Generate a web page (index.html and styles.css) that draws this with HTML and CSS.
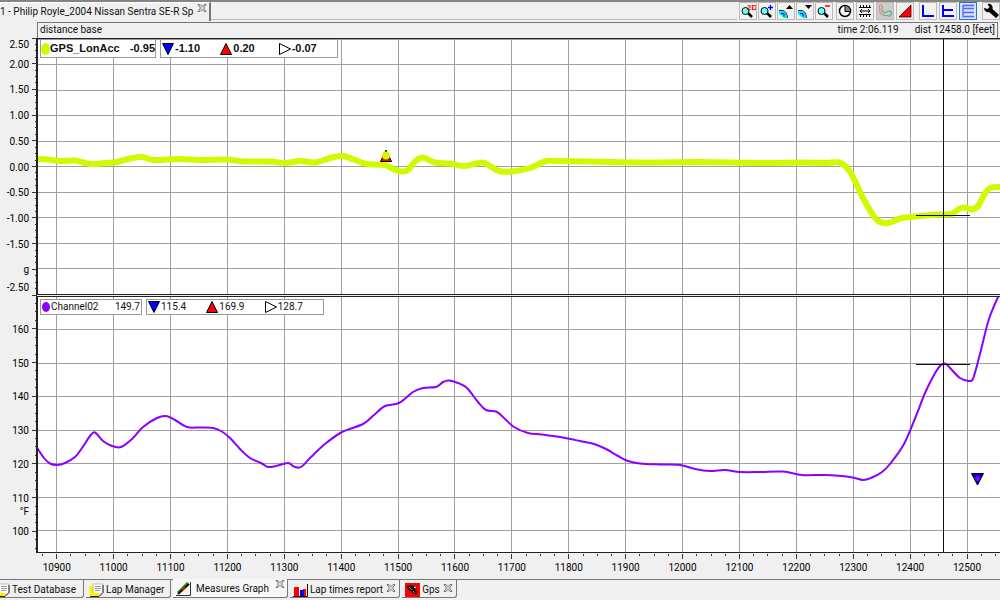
FILE: index.html
```html
<!DOCTYPE html>
<html lang="en">
<head>
<meta charset="utf-8">
<title>Measures Graph</title>
<link rel="stylesheet" href="styles.css">
</head>
<body>
<header class="topbar">
  <div class="doc-tab"><span>1 - Philip Royle_2004 Nissan Sentra SE-R Sp</span><button class="close" aria-label="Close document"><svg viewBox="0 0 10 8"><use href="#x"/></svg></button></div>
  <div class="topbar-line"></div>
  <nav class="toolbar" aria-label="Graph tools">
    <div class="group tight">
      <button aria-label="Zoom 2D"><svg viewBox="0 0 16 16"><use href="#lens"/><text class="tiny" x="7" y="7">2D</text></svg></button>
      <button aria-label="Zoom in"><svg viewBox="0 0 16 16"><use href="#lens"/><path d="M9 4.500h5M11.500 2v5" stroke="#00f" stroke-width="1.300"/></svg></button>
      <button aria-label="Scale up"><svg viewBox="0 0 16 16"><use href="#scope"/><path d="M8 6l3.500-4 3.500 4z"/></svg></button>
      <button aria-label="Scale down"><svg viewBox="0 0 16 16"><use href="#scope"/><path d="M8 2l3.500 4 3.500-4z"/></svg></button>
      <button aria-label="Zoom out"><svg viewBox="0 0 16 16"><use href="#lens"/><path d="M9 3h5" stroke="red" stroke-width="1.500"/></svg></button>
    </div>
    <div class="group">
      <button aria-label="Time base"><svg viewBox="0 0 16 16"><circle cx="8" cy="8" r="5.500" fill="#fff" stroke="#000" stroke-width="1.500"/><path d="M8 8V3a5 5 0 0 1 5 5z" fill="#888"/><path d="M8 3v5.500h5" fill="none" stroke="#000"/></svg></button>
      <button aria-label="Distance base"><svg viewBox="0 0 16 16"><path d="M3.500 2v3M6.500 2v3M9.500 2v3M12.500 2v3M3.500 11v3M6.500 11v3M9.500 11v3M12.500 11v3M2 4.500h12M2 11.500h12M3 8h10M5 6L3 8l2 2M11 6l2 2-2 2" fill="none" stroke="#000"/></svg></button>
      <button class="pressed" aria-label="Track map"><svg viewBox="0 0 16 16"><path d="M6 12Q2 11 3 6Q1 2 4 2Q6 3 5 7" fill="none" stroke="#d88" stroke-width="1.200"/><path d="M5 7Q6 11 9 9L13 8Q16 10 13 13L6 12" fill="none" stroke="#5a8" stroke-width="1.200"/></svg></button>
      <button aria-label="Slope"><svg viewBox="0 0 16 16"><path d="M2 14L14 2v12z" fill="red" stroke="#300" stroke-width=".8"/></svg></button>
    </div>
    <div class="group wide">
      <button aria-label="Single graph"><svg viewBox="0 0 16 16"><path d="M3 2v11h11" fill="none" stroke="#00f" stroke-width="2"/></svg></button>
      <button aria-label="Two graphs"><svg viewBox="0 0 16 16"><path d="M3 2v11h11M3 7h10" fill="none" stroke="#00f" stroke-width="2"/></svg></button>
      <button class="selected" aria-label="Stacked graphs"><svg viewBox="0 0 16 16"><path d="M3 2v11.500h11M3 9.500h11M3 5.500h11M3 2.500h11" fill="none" stroke="#56f" stroke-width="1.300"/></svg></button>
    </div>
    <div class="group wide">
      <button aria-label="Settings"><svg viewBox="0 0 16 16"><path d="M1 5a4 4 0 0 0 5 4l7 6 3-3-6.500-6a4 4 0 0 0-5-5l2 3-2 2z"/></svg></button>
    </div>
  </nav>
</header>

<div class="infobar">
  <span>distance base</span>
  <span class="readout"><span>time 2:06.119</span><span>dist 12458.0 [feet]</span></span>
</div>

<main class="graphs">
  <svg class="axis" id="axis-acc" aria-hidden="true"></svg>
  <section class="plot" aria-label="GPS_LonAcc">
    <svg class="canvas" id="plot-acc"></svg>
    <div class="legend bold">
      <div class="box channel"><i class="dot lime"></i><span>GPS_LonAcc</span><span class="value">-0.95</span></div>
      <div class="box stats"><span><svg viewBox="0 0 12 12"><use href="#min"/></svg>-1.10</span><span><svg viewBox="0 0 12 12"><use href="#max"/></svg>0.20</span><span><svg viewBox="0 0 12 12"><use href="#avg"/></svg>-0.07</span></div>
    </div>
  </section>
  <svg class="axis" id="axis-temp" aria-hidden="true"></svg>
  <section class="plot" aria-label="Channel02">
    <svg class="canvas" id="plot-temp"></svg>
    <div class="legend">
      <div class="box channel"><i class="dot violet"></i><span>Channel02</span><span class="value">149.7</span></div>
      <div class="box stats"><span><svg viewBox="0 0 12 12"><use href="#min"/></svg>115.4</span><span><svg viewBox="0 0 12 12"><use href="#max"/></svg>169.9</span><span><svg viewBox="0 0 12 12"><use href="#avg"/></svg>128.7</span></div>
    </div>
  </section>
  <div class="xaxis"><svg id="xaxis"></svg></div>
</main>

<nav class="tabs" aria-label="Views">
  <button class="tab first"><svg class="ticon" viewBox="0 0 15 14"><use href="#note"/></svg>Test Database</button>
  <button class="tab second"><svg class="ticon" viewBox="0 0 15 14"><use href="#note"/></svg>Lap Manager</button>
  <div class="tab active"><button class="label"><svg class="ticon" viewBox="0 0 15 14"><path d="M14.500 0v13.500H0" fill="none" stroke="#333"/><path d="M2 11L12 1" stroke="#0a0" stroke-width="3"/><path d="M2 12L13 2" stroke="#200" stroke-width="2"/><path d="M6 8l3-3" stroke="red" stroke-width="2"/></svg>Measures Graph</button><button class="close" aria-label="Close Measures Graph"><svg viewBox="0 0 10 8"><use href="#x"/></svg></button></div>
  <div class="tab"><button class="label"><svg class="ticon" viewBox="0 0 15 14"><path d="M1 4h5v9H1zM10 6h3v7h-3z" fill="red"/><path d="M7 7h4v6H7z" fill="#00f"/><path d="M14.500 1v12.500H0" fill="none" stroke="#300"/></svg>Lap times report</button><button class="close" aria-label="Close Lap times report"><svg viewBox="0 0 10 8"><use href="#x"/></svg></button></div>
  <div class="tab"><button class="label"><svg class="ticon" viewBox="0 0 15 14"><path d="M0 0h15v14H0z" fill="red"/><path d="M2 3l5-1 5 3-2 2 3 2-2 3-3-2-2-2-3-1z" fill="#201010"/><path d="M4 4l3 3M8 8l2 2" stroke="#58c"/><path d="M9 4l2 1" stroke="#fff"/></svg>Gps</button><button class="close" aria-label="Close Gps"><svg viewBox="0 0 10 8"><use href="#x"/></svg></button></div>
</nav>

<svg class="defs" aria-hidden="true">
  <symbol id="x" viewBox="0 0 10 8"><path d="M1 .5h2l2 2 2-2h2L6.500 4 9 7.500H7l-2-2-2 2H1L3.500 4z" fill="#ddd" stroke="#777"/></symbol>
  <symbol id="lens" viewBox="0 0 16 16"><path d="M8 10l4 4" stroke="#000" stroke-width="2.500"/><circle cx="5.500" cy="8" r="3.500" fill="#6ff" stroke="#000"/></symbol>
  <symbol id="scope" viewBox="0 0 16 16"><path d="M1 8h4q4 1 4 7H6L1 11z" fill="#0ee"/><path d="M1 7.500h4q4 1 4.500 7.500" fill="none" stroke="#333"/><path d="M3 10.500h3v3" fill="none" stroke="#00f"/></symbol>
  <symbol id="min" viewBox="0 0 12 12"><path d="M.5.5h11L6 11.500z" fill="#00f" stroke="#000"/></symbol>
  <symbol id="max" viewBox="0 0 12 12"><path d="M.5 11.500h11L6 .5z" fill="red" stroke="#000"/></symbol>
  <symbol id="avg" viewBox="0 0 12 12"><path d="M.5.5v11L11.500 6z" fill="#fff" stroke="#000"/></symbol>
  <symbol id="note" viewBox="0 0 15 14"><path d="M0 3h5v10H1z" fill="#fe0"/><path d="M4 1h10v9l-3 2H4z" fill="#fff" stroke="#999" stroke-width=".6"/><path d="M6 3.500h6M6 5.500h6M6 7.500h5" stroke="#999"/><path d="M1 13V7l4 3h6l-1 3z" fill="#fe0"/><path d="M1 13.500h9l4-4V2" fill="none" stroke="#222"/></symbol>
</svg>
<script src="graph.js"></script>
</body>
</html>
```
FILE: styles.css
```css
* { box-sizing: border-box; }

body {
  margin: 0;
  height: 100vh;
  min-height: 400px;
  display: flex;
  flex-direction: column;
  overflow: hidden;
  background: #f0f0f0;
  color: #111;
  font: 10px/14px Roboto, sans-serif;
}

button {
  margin: 0;
  padding: 0;
  border: 0;
  background: none;
  color: inherit;
  font: inherit;
}

.defs { position: absolute; width: 0; height: 0; }

.topbar {
  display: flex;
  height: 22px;
  flex: none;
  border-top: 2px solid #858585;
}
.doc-tab {
  display: flex;
  justify-content: space-between;
  width: 211px;
  height: 19px;
  padding: 2px 0 0 0;
  border-top: 1px solid #fff;
  border-right: 2px solid #777;
  white-space: nowrap;
}
.close { width: 10px; height: 8px; display: block; flex: none; }
.close svg { display: block; width: 10px; height: 8px; }
.doc-tab .close { margin-right: 2px; margin-top: -1px; }
.topbar-line { flex: 1; height: 18px; border-bottom: 1px solid #bbb; }

.toolbar { display: flex; padding: 0 0 0 2px; }
.group { display: flex; gap: 2px; margin-left: 3px; }
.group.tight { gap: 1px; margin-left: 0; }
.group.wide { margin-left: 5px; }
.toolbar button {
  width: 18px;
  height: 18px;
  border: 1px solid #bbb;
  background: #f2f2f2;
}
.toolbar button svg { display: block; width: 16px; height: 16px; }
.toolbar .pressed { background: #ccc; }
.toolbar .selected { border-color: #2b76c8; background: #cfe4fb; }
.tiny { font: bold 8px "Liberation Sans", sans-serif; fill: red; }

.infobar {
  display: flex;
  flex: none;
  justify-content: space-between;
  height: 16px;
  margin: 0 2px 0 37px;
  padding: 0 2px;
  border: 1px solid #777;
  border-bottom: 0;
}
.readout { display: flex; gap: 16px; }

.graphs {
  flex: 1;
  min-height: 0;
  display: grid;
  grid-template-columns: 36px minmax(0, 1fr);
  grid-template-rows: minmax(0, 1fr) minmax(0, 1fr) 25px;
  row-gap: 1px;
}
.axis { display: block; width: 36px; height: 100%; overflow: visible; }
.axis text { text-anchor: end; }
.plot {
  position: relative;
  min-height: 0;
  background: #fff;
  border: solid #222;
  border-width: 1px 0 1px 2px;
}
.canvas { display: block; width: 100%; height: 100%; }
.xaxis { grid-column: 2; padding-left: 2px; }
.xaxis svg { display: block; width: 100%; height: 25px; overflow: visible; }
.xaxis text { text-anchor: middle; }

.tick { stroke: #333; shape-rendering: crispEdges; }
.gridline { stroke: #a0a0a0; shape-rendering: crispEdges; }
.cursor { stroke: #111; shape-rendering: crispEdges; }
.trace { fill: none; vector-effect: non-scaling-stroke; stroke-linejoin: round; }
.trace.acc { stroke: #d0fa00; stroke-width: 6px; }
.trace.temp { stroke: #8c00ff; stroke-width: 2px; }

.legend {
  position: absolute;
  top: 2px;
  left: 2px;
  display: flex;
  gap: 4px;
}
.legend.bold { top: 0; font: bold 11px/17px "Liberation Sans", sans-serif; }
.box {
  display: flex;
  align-items: center;
  background: #fff;
  border: 1px solid #999;
}
.channel { width: 102px; padding: 0 1px; }
.bold .channel { width: 116px; padding: 0; }
.bold .stats { width: 178px; }
.value { margin-left: auto; }
.dot { width: 8px; height: 10px; border-radius: 50%; margin-right: 1px; }
.bold .dot { width: 9px; height: 12px; margin-right: 0; }
.lime { background: #d0fa00; }
.violet { background: #8c00ff; }
.stats { width: 178px; padding-left: 1px; }
.stats span { display: flex; align-items: center; gap: 1px; width: 60px; }
.stats svg { width: 12px; height: 12px; flex: none; }

.tabs {
  display: flex;
  flex: none;
  gap: 2px;
  height: 21px;
  border-top: 1px solid #777;
}
.tab {
  display: flex;
  align-items: center;
  height: 18px;
  padding: 3px 3px 0;
  border: solid #777;
  border-width: 0 1px 1px 0;
  border-radius: 0 0 3px 0;
  white-space: nowrap;
}
.ticon { width: 15px; height: 14px; margin-right: 2px; flex: none; }
.tab.first { width: 84px; padding-left: 0; }
.tab.first .ticon { margin-left: -5px; }
.tab.second { width: 85px; }
.tab .label { display: flex; align-items: center; }
.tab .close { margin: -4px 0 0 3px; }
.tab.active { height: 19px; margin-top: -1px; padding: 1px 2px 0 3px; background: #f8f8f8; }
.tab.active .ticon { margin-right: 5px; }
.tab.active .close { margin-top: -9px; margin-left: 6px; }
```
FILE: graph.js
```js
const NS = "http://www.w3.org/2000/svg";

function add(parent, name, attrs, text) {
  const node = document.createElementNS(NS, name);
  for (const key in attrs) node.setAttribute(key, attrs[key]);
  if (text) node.textContent = text;
  parent.appendChild(node);
  return node;
}
const pct = v => v * 100 + "%";

// Distance range shown, in feet
const X0 = 10867, X1 = 12558;
const fx = d => (d - X0) / (X1 - X0);
const CURSOR = 12458;

// Catmull-Rom spline through the samples
function smooth(p) {
  let d = `M${p[0][0]} ${p[0][1]}`;
  for (let i = 0; i < p.length - 1; i++) {
    const a = p[i - 1] || p[i], b = p[i], c = p[i + 1], e = p[i + 2] || c;
    d += `C${b[0] + (c[0] - a[0]) / 6} ${b[1] + (c[1] - a[1]) / 6} ${c[0] - (e[0] - b[0]) / 6} ${c[1] - (e[1] - b[1]) / 6} ${c[0]} ${c[1]}`;
  }
  return d;
}

function chart(o) {
  const axis = document.getElementById("axis-" + o.id);
  const plot = document.getElementById("plot-" + o.id);
  const fy = v => (o.max - v) / (o.max - o.min);
  const quarter = o.step / 4;
  for (let i = Math.ceil(o.min / quarter); i * quarter <= o.max; i++) {
    const y = pct(fy(i * quarter));
    const major = i % 4 === 0;
    add(axis, "line", { class: "tick", x1: major ? 32 : 35, x2: 37, y1: y, y2: y });
    if (major) add(plot, "line", { class: "gridline", x1: 0, x2: "100%", y1: y, y2: y });
  }
  for (const [v, label, shift = 4] of o.labels)
    add(axis, "text", { x: 29, y: pct(fy(v)), dy: shift }, label);
  for (let d = 10900; d < X1; d += 100)
    add(plot, "line", { class: "gridline", x1: pct(fx(d)), x2: pct(fx(d)), y1: 0, y2: "100%" });

  const layer = add(plot, "svg", { viewBox: o.view, preserveAspectRatio: "none", width: "100%", height: "100%" });
  add(layer, "path", { class: "trace " + o.id, d: smooth(o.points) });
  layer.insertAdjacentHTML("beforeend", o.marker);

  const cx = fx(CURSOR), cy = pct(fy(o.value));
  add(plot, "line", { class: "cursor", x1: pct(cx), x2: pct(cx), y1: 0, y2: "100%" });
  add(plot, "line", { class: "cursor", x1: pct(cx - 0.028), x2: pct(cx + 0.028), y1: cy, y2: cy });
}

chart({
  id: "acc", min: -2.5, max: 2.5, step: 0.5, value: -0.96,
  labels: [[2.5, "2.50", 10], [2, "2.00"], [1.5, "1.50"], [1, "1.00"], [0.5, "0.50"], [0, "0.00"],
    [-0.5, "-0.50"], [-1, "-1.00"], [-1.5, "-1.50"], [-2, "g"], [-2.5, "-2.50", -4]],
  view: "38 39 962 255",
  points: [[36, 159], [48, 159.5], [60, 161], [75, 160.5], [90, 164], [105, 163], [117, 162], [130, 158.5], [142, 157], [154, 160], [180, 159], [200, 160], [225, 159.5], [245, 161.500], [270, 161.500], [285, 163], [300, 161], [315, 162.500], [330, 158], [343, 156], [355, 160], [367, 164], [385, 165], [393, 169], [401, 171.500], [408, 170], [415, 161.500], [423, 157.500], [435, 162.500], [450, 163.500], [464, 166], [482, 162.500], [490, 166], [499, 171], [512, 171.500], [530, 168], [545, 161.500], [560, 161], [640, 162.500], [700, 162], [760, 163], [800, 162.500], [825, 163], [839, 162.500], [848, 169], [855, 181], [863, 198], [873, 215], [879, 221.500], [888, 223], [900, 218.500], [911, 217], [925, 215.500], [940, 214.500], [951, 214], [959, 209], [965, 207.500], [972, 209.500], [978, 206], [984, 195], [990, 188], [1002, 187]],
  marker: '<path d="M380.500 161.500h11L386 150z" fill="red" stroke="#000"/><circle cx="386" cy="155.500" r="4" fill="#d0fa00"/>'
});

chart({
  id: "temp", min: 93.600, max: 169.700, step: 10, value: 149.700,
  labels: [[160, "160"], [150, "150"], [140, "140"], [130, "130"], [120, "120"], [110, "110"], [106, "°F"], [100, "100"]],
  view: "38 297 962 255",
  points: [[36, 446], [44, 458], [50, 463.500], [57, 465], [65, 463], [75, 457], [82, 448], [90, 436], [95, 432.500], [103, 441], [112, 446], [121, 447], [132, 439], [143, 427], [157, 418], [166, 416], [175, 420], [187, 427], [200, 427.500], [213, 428], [221, 431], [230, 438], [240, 449], [250, 458], [261, 463], [268, 467], [276, 466], [288, 463], [294, 466.500], [301, 467], [311, 457], [325, 444], [342, 432], [363, 424], [374, 415], [385, 406], [399, 403], [413, 392], [423, 388], [436, 387], [443, 382], [449, 380.500], [458, 383], [467, 388], [478, 402], [486, 410], [497, 412], [505, 419], [514, 427], [528, 433], [542, 434.500], [560, 437], [580, 441], [594, 444], [606, 449], [618, 456], [628, 461], [640, 463.500], [660, 464.500], [680, 465], [695, 469], [710, 471], [725, 470], [740, 472], [760, 472], [783, 471.500], [802, 475], [825, 475], [850, 477], [863, 480], [872, 477.500], [882, 472], [890, 464], [904, 444], [916, 416], [925, 393], [934, 375], [940, 366], [945, 363.500], [951, 369], [960, 378], [970, 381], [974, 376], [981, 350], [988, 322], [994, 306], [1000, 293]],
  marker: '<path d="M971.500 473.500h12L977.500 485z" fill="#00c" stroke="#000"/><circle cx="977.500" cy="478.500" r="2.500" fill="#8c00ff"/>'
});

const xaxis = document.getElementById("xaxis");
for (let d = 10875; d < X1; d += 25) {
  const x = pct(fx(d));
  const major = d % 100 === 0;
  add(xaxis, "line", { class: "tick", x1: x, x2: x, y1: 0, y2: major ? 5 : 2 });
  if (major) add(xaxis, "text", { x, y: 17 }, String(d));
}
```
